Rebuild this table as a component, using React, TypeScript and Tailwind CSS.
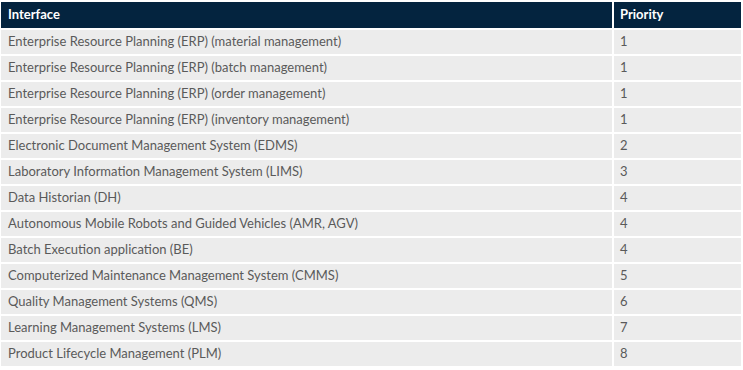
const rows: [string, string][] = [
  ["Enterprise Resource Planning (ERP) (material management)", "1"],
  ["Enterprise Resource Planning (ERP) (batch management)", "1"],
  ["Enterprise Resource Planning (ERP) (order management)", "1"],
  ["Enterprise Resource Planning (ERP) (inventory management)", "1"],
  ["Electronic Document Management System (EDMS)", "2"],
  ["Laboratory Information Management System (LIMS)", "3"],
  ["Data Historian (DH)", "4"],
  ["Autonomous Mobile Robots and Guided Vehicles (AMR, AGV)", "4"],
  ["Batch Execution application (BE)", "4"],
  ["Computerized Maintenance Management System (CMMS)", "5"],
  ["Quality Management Systems (QMS)", "6"],
  ["Learning Management Systems (LMS)", "7"],
  ["Product Lifecycle Management (PLM)", "8"],
];

export default function App() {
  return (
    <div className="w-[743px] h-[370px] bg-white pl-px pt-[2px] font-['Lato','Liberation_Sans',sans-serif] text-[13px]">
      <div className="grid grid-cols-[611px_127px] gap-[2px]">
        <div className="h-[26px] bg-[#04243f] px-[7px] flex items-center font-bold text-white">Interface</div>
        <div className="h-[26px] bg-[#04243f] px-[6px] flex items-center font-bold text-white">Priority</div>
        {rows.map(([name, prio]) => (
          <>
            <div key={name} className="h-[24px] bg-[#ececec] px-[7px] flex items-center text-[#5a5a5a]">
              {name}
            </div>
            <div key={name + "-p"} className="h-[24px] bg-[#ececec] px-[6px] flex items-center text-[#5a5a5a]">
              {prio}
            </div>
          </>
        ))}
      </div>
    </div>
  );
}
